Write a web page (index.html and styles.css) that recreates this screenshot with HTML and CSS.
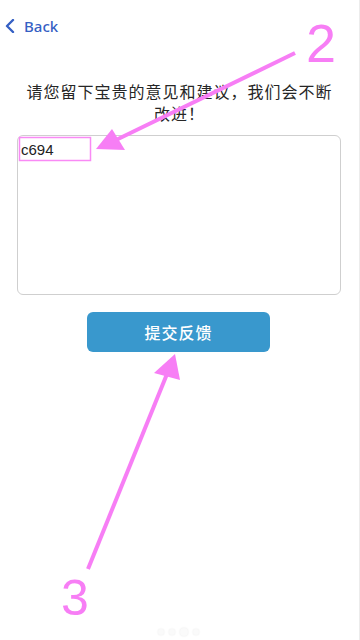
FILE: index.html
```html
<!DOCTYPE html>
<html lang="zh-CN">
<head>
  <meta charset="UTF-8" />
  <meta name="viewport" content="width=device-width,initial-scale=1.0" />
  <title>意见反馈</title>
  <link rel="stylesheet" href="styles.css">
</head>
<body>
  <div class="page">
    <div class="topbar">
      <a class="back" href="#">
        <svg class="back-icon" width="10" height="14" viewBox="0 0 10 14">
          <path d="M8 1 L2 7 L8 13" fill="none" stroke="#3560c4" stroke-width="2.4" stroke-linecap="round" stroke-linejoin="round"/>
        </svg>
        <span>Back</span>
      </a>
    </div>

    <p class="intro">请您留下宝贵的意见和建议，我们会不断改进！</p>

    <div class="feedback-box">c694</div>

    <button class="submit-btn">提交反馈</button>

    <!-- annotation layer drawn over the screenshot -->
    <svg class="marks" width="360" height="640" viewBox="0 0 360 640">
      <rect x="19.5" y="137.5" width="71" height="23" fill="none" stroke="#f98af5" stroke-width="1.5"/>
      <line x1="295" y1="53" x2="116" y2="140" stroke="#f77ef5" stroke-width="4"/>
      <polygon points="96,149 112,129 125,150" fill="#f77ef5"/>
      <text x="306" y="62" class="mark-num">2</text>
      <line x1="88" y1="569" x2="167" y2="374" stroke="#f77ef5" stroke-width="4"/>
      <polygon points="175,354 154,373 180,380" fill="#f77ef5"/>
      <text x="61" y="615" class="mark-num mark-3">3</text>
    </svg>

    <div class="dots">
      <span></span><span></span><span class="on"></span><span></span>
    </div>
  </div>
</body>
</html>
```

FILE: styles.css
```css
body {
  margin: 0;
  background-color: #fff;
  font-family: "Noto Sans CJK SC", "Liberation Sans", sans-serif;
  color: #2b2b2b;
}
.page {
  position: relative;
  width: 360px;
  height: 640px;
  overflow: hidden;
  border-right: 1px solid #ececec;
  box-sizing: border-box;
}
.topbar {
  height: 52px;
  display: flex;
  align-items: center;
  padding-left: 5px;
}
.back {
  display: flex;
  align-items: center;
  gap: 9px;
  color: #3560c4;
  text-decoration: none;
  font-family: "Noto Sans", "Liberation Sans", sans-serif;
  font-weight: 500;
  font-size: 15px;
}
.intro {
  margin: 28px 20px 0;
  font-size: 16px;
  line-height: 22px;
  letter-spacing: 1px;
  text-align: center;
  color: #262626;
}
.feedback-box {
  margin: 11px 0 0 17px;
  width: 324px;
  height: 160px;
  box-sizing: border-box;
  border: 1px solid #cfcfcf;
  border-radius: 6px;
  padding: 5px 3px;
  font-family: "Liberation Sans", sans-serif;
  font-size: 15px;
  color: #222;
}
.submit-btn {
  display: block;
  margin: 17px 0 0 87px;
  width: 183px;
  height: 40px;
  border: none;
  border-radius: 6px;
  background-color: #3998cd;
  color: #fff;
  font-family: "Noto Sans CJK SC", sans-serif;
  font-size: 16px;
  font-weight: 500;
  letter-spacing: 1px;
}
.marks {
  position: absolute;
  top: 0;
  left: 0;
  pointer-events: none;
}
.mark-num {
  font-family: "Liberation Sans", sans-serif;
  font-size: 54px;
  fill: #f77ef5;
}
.mark-3 { font-size: 50px; }
.dots {
  position: absolute;
  left: 158px;
  bottom: 4px;
  display: flex;
  gap: 5px;
  align-items: center;
}
.dots span {
  width: 6px;
  height: 6px;
  border-radius: 50%;
  background-color: #fafafa;
  box-shadow: 0 0 2px #e6e6e6;
}
.dots span.on {
  width: 8px;
  height: 8px;
}
```
